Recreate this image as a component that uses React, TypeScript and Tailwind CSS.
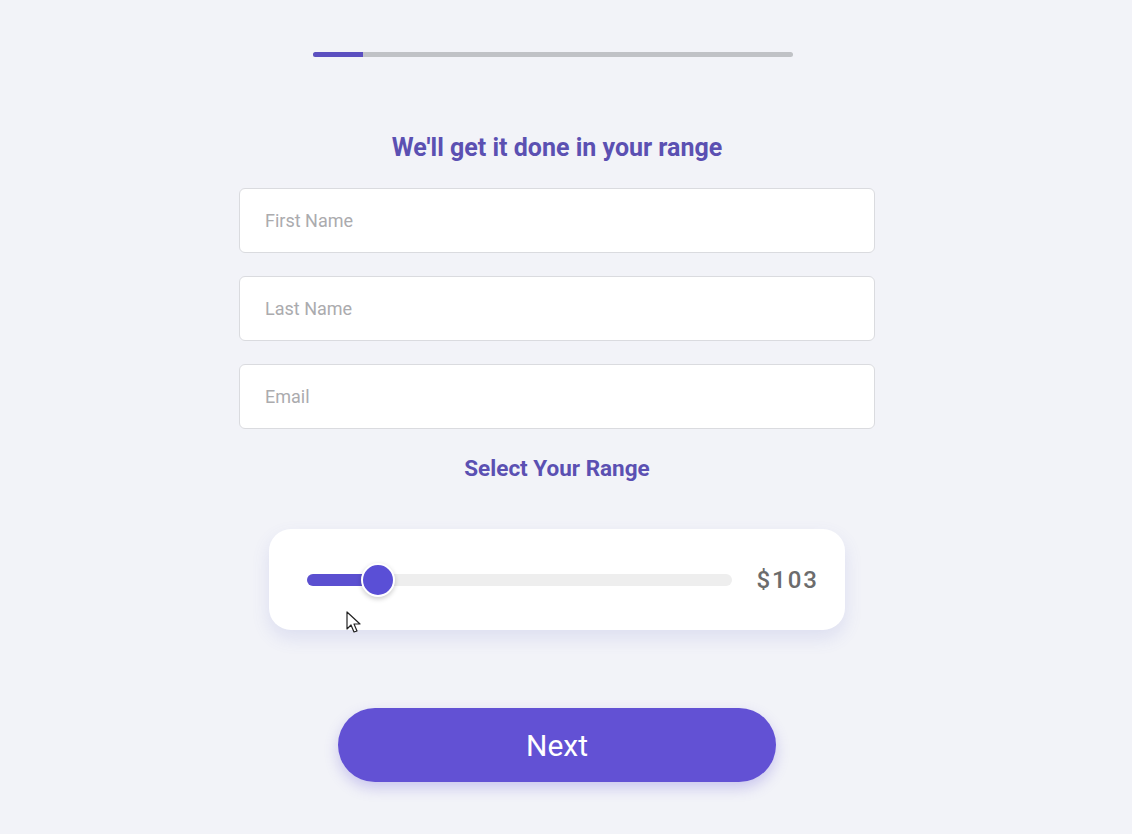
import { useState } from 'react';

const fields = ['First Name', 'Last Name', 'Email'];

export default function App() {
  const [value] = useState(103);

  return (
    <div className="min-h-[834px] w-full bg-[#f2f3f8] font-['Roboto',sans-serif]">
      <div className="w-[1114px] flex flex-col items-center pt-[52px]">
        {/* progress */}
        <div className="w-[480px] h-[5px] rounded-full bg-[#c0c2c6] mr-[8px] overflow-hidden">
          <div className="w-[50px] h-full bg-[#5b4fc0]" />
        </div>

        <h1 className="mt-[75px] text-[25px] leading-[32px] font-bold text-[#5b50b2]">
          We'll get it done in your range
        </h1>

        <div className="mt-[24px] flex flex-col gap-[23px]">
          {fields.map((f) => (
            <input
              key={f}
              placeholder={f}
              className="w-[636px] h-[65px] rounded-[6px] border border-[#dadbdf] bg-white px-[25px] text-[18px] text-[#333] placeholder:text-[#ababae] outline-none"
            />
          ))}
        </div>

        <h2 className="mt-[24px] text-[22.5px] leading-[30px] font-bold text-[#5b50b2]">
          Select Your Range
        </h2>

        {/* slider card */}
        <div className="relative mt-[46px] w-[576px] h-[101px] rounded-[22px] bg-white shadow-[0_8px_18px_rgba(90,100,200,0.14)] flex items-center pl-[38px] pr-[26px]">
          <div className="relative flex-1 h-[12px] rounded-full bg-[#eeeeee]">
            <div className="absolute left-0 top-0 h-full w-[72px] rounded-full bg-[#5b4fd0]" />
            <div className="absolute left-[54px] top-[-11px] w-[34px] h-[34px] rounded-full bg-[#5a4fd6] border-[2px] border-white shadow-[0_2px_5px_rgba(0,0,0,0.2)]" />
          </div>
          <span className="ml-[24px] text-[24px] font-medium tracking-[2px] text-[#6c6c6c]">
            ${value}
          </span>
          {/* mouse cursor */}
          <svg
            className="absolute left-[77px] top-[82px]"
            width="17"
            height="24"
            viewBox="0 0 17 24"
          >
            <path
              d="M1 1 L1 18 L5 14 L8 21 L11 20 L8 13 L14 13 Z"
              fill="white"
              stroke="#222"
              strokeWidth="1.2"
              strokeLinejoin="round"
            />
          </svg>
        </div>

        <button className="mt-[78px] w-[438px] h-[74px] rounded-full bg-[#6251d4] text-white text-[30px] shadow-[0_6px_14px_rgba(98,81,212,0.28)]">
          Next
        </button>
      </div>
    </div>
  );
}
